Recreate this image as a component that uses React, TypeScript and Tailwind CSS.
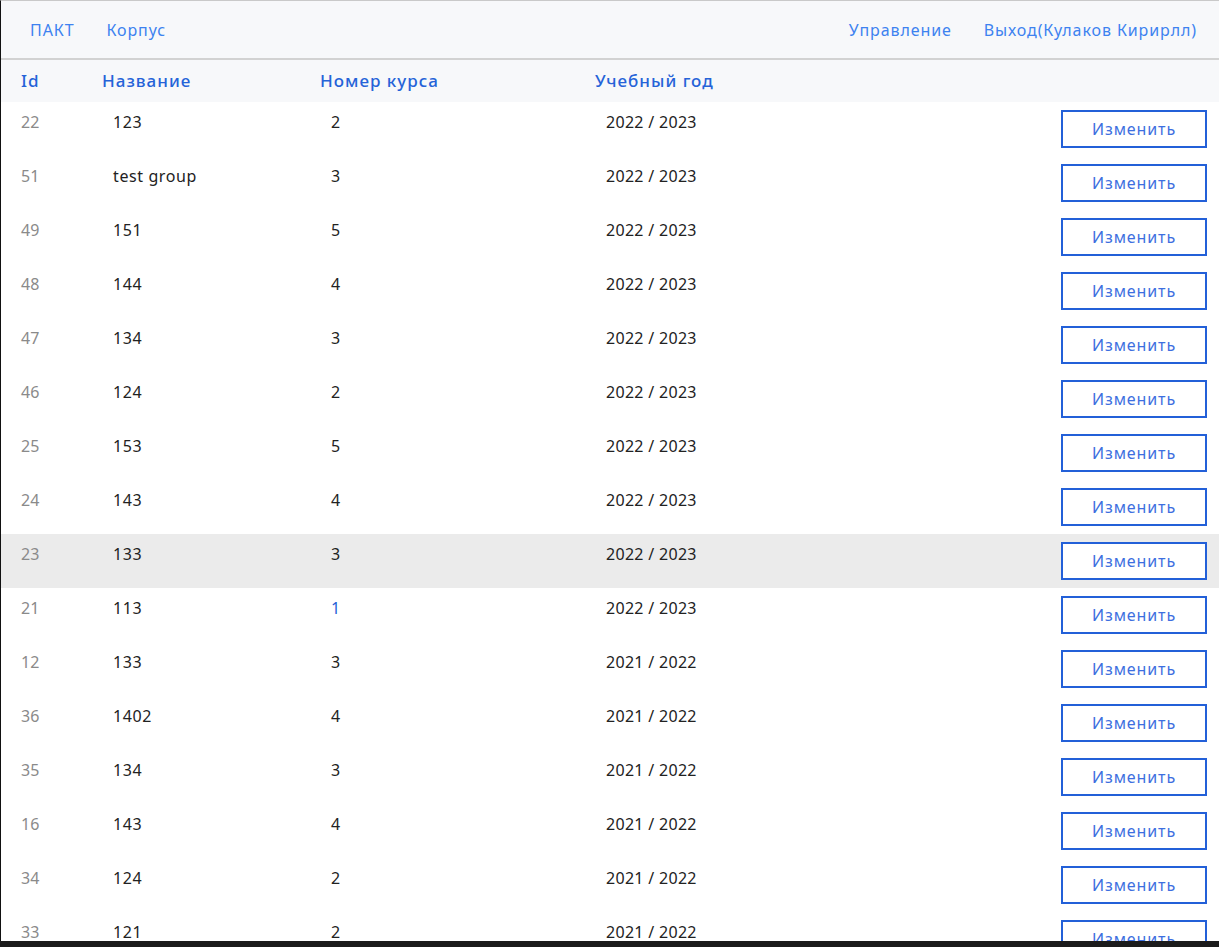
import React from "react";

const rows = [
  { id: 22, name: "123", course: "2", year: "2022 / 2023" },
  { id: 51, name: "test group", course: "3", year: "2022 / 2023" },
  { id: 49, name: "151", course: "5", year: "2022 / 2023" },
  { id: 48, name: "144", course: "4", year: "2022 / 2023" },
  { id: 47, name: "134", course: "3", year: "2022 / 2023" },
  { id: 46, name: "124", course: "2", year: "2022 / 2023" },
  { id: 25, name: "153", course: "5", year: "2022 / 2023" },
  { id: 24, name: "143", course: "4", year: "2022 / 2023" },
  { id: 23, name: "133", course: "3", year: "2022 / 2023", hover: true },
  { id: 21, name: "113", course: "1", year: "2022 / 2023", blue: true },
  { id: 12, name: "133", course: "3", year: "2021 / 2022" },
  { id: 36, name: "1402", course: "4", year: "2021 / 2022" },
  { id: 35, name: "134", course: "3", year: "2021 / 2022" },
  { id: 16, name: "143", course: "4", year: "2021 / 2022" },
  { id: 34, name: "124", course: "2", year: "2021 / 2022" },
  { id: 33, name: "121", course: "2", year: "2021 / 2022" },
];

export default function App() {
  return (
    <div className="h-[947px] w-full overflow-hidden bg-[#1b1b1b] font-['Noto_Sans',sans-serif]">
      <div className="h-[941px] overflow-hidden border-l border-t border-l-[#111] border-t-[#c9c9c9] bg-white">
        {/* top nav */}
        <nav className="flex h-[59px] items-center justify-between border-b-2 border-[#d2d2d2] bg-[#f7f8fa] pl-[29px] pr-[22px] text-[16px] tracking-[0.9px] text-[#3d82f0]">
          <div className="flex gap-[32px]">
            <span>ПАКТ</span>
            <span>Корпус</span>
          </div>
          <div className="flex gap-[32px]">
            <span>Управление</span>
            <span>Выход(Кулаков Кирирлл)</span>
          </div>
        </nav>

        {/* table head */}
        <div className="flex h-[42px] items-center bg-[#f7f8fa] pl-[20px] text-[17px] font-medium tracking-[1px] text-[#2563d8]">
          <div className="w-[81px]">Id</div>
          <div className="w-[218px]">Название</div>
          <div className="w-[275px]">Номер курса</div>
          <div>Учебный год</div>
        </div>

        {/* rows */}
        {rows.map((r) => (
          <div
            key={r.id}
            className={`flex h-[54px] items-start pl-[20px] pr-[12px] text-[16px] text-[#222] ${r.hover ? "bg-[#ebebeb]" : ""}`}
          >
            <div className="w-[92px] pt-[8px] text-[#8a8a8a]">{r.id}</div>
            <div className="w-[218px] pt-[8px] tracking-[0.6px]">{r.name}</div>
            <div className={`w-[275px] pt-[8px] ${r.blue ? "text-[#1f5fd6]" : ""}`}>{r.course}</div>
            <div className="flex-1 pt-[8px] tracking-[0.3px]">{r.year}</div>
            <button className="mt-[8px] h-[38px] w-[146px] border-2 border-[#2360d8] bg-white text-[16px] tracking-[0.9px] text-[#3d6fe0]">
              Изменить
            </button>
          </div>
        ))}
      </div>
    </div>
  );
}
